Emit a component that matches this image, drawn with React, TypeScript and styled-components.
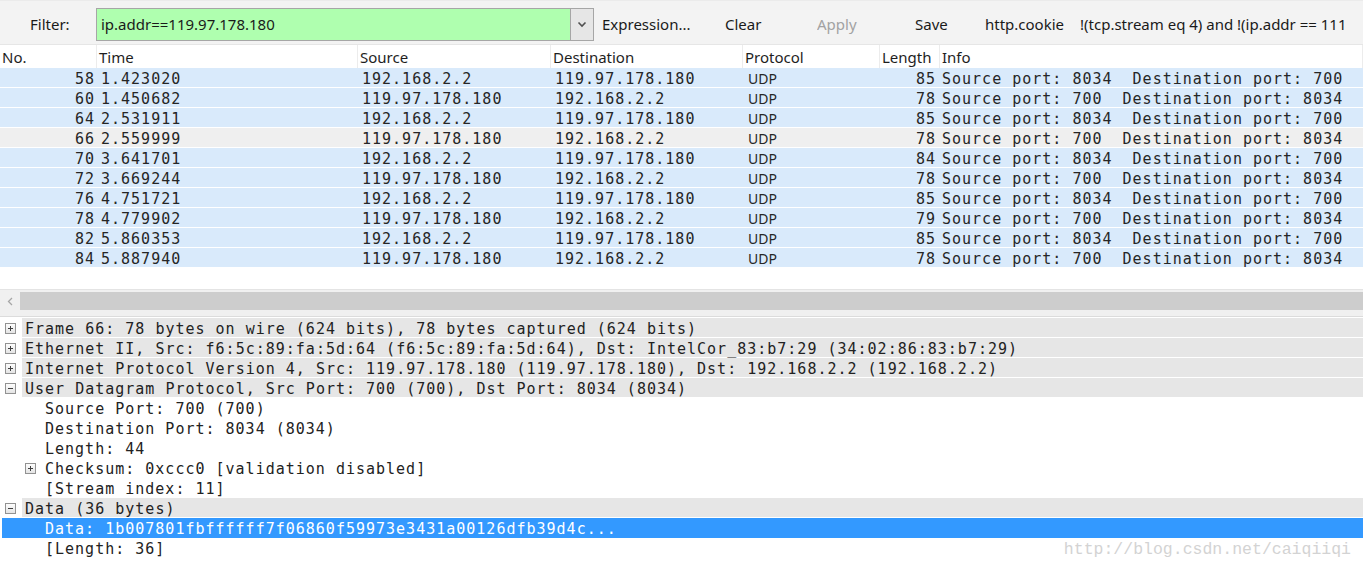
import styled, { createGlobalStyle } from 'styled-components';

const GlobalStyle = createGlobalStyle`
  html, body {
    margin: 0;
    padding: 0;
    background: #fff;
  }
  body {
    font-family: "Noto Sans", "Liberation Sans", sans-serif;
  }
`;

const COLS = '97px 261px 193px 192px 137px 60px 1fr';

const Window = styled.div`
  position: relative;
  width: 1363px;
  height: 568px;
  overflow: hidden;
  background: #fff;
  display: flex;
  flex-direction: column;
`;

// Filter toolbar
const Toolbar = styled.div`
  height: 45px;
  box-sizing: border-box;
  padding-top: 3px;
  display: flex;
  align-items: center;
  background: #f3f3f3;
  border-top: 1px solid #ebebeb;
  border-bottom: 1px solid #e6e6e6;
  font-size: 15px;
  color: #1a1a1a;
  white-space: nowrap;
`;

const FilterLabel = styled.span`
  width: 66px;
  padding-left: 30px;
`;

const FilterCombo = styled.div`
  display: flex;
  height: 33px;
  width: 498px;
  margin-right: 8px;
`;

const FilterInput = styled.div`
  flex: 1;
  box-sizing: border-box;
  display: flex;
  align-items: center;
  padding-left: 4px;
  background: #afffaf;
  border: 1px solid #a6a6a6;
  border-right: none;
`;

const DropButton = styled.div`
  width: 24px;
  box-sizing: border-box;
  display: flex;
  align-items: center;
  justify-content: center;
  background: #e6e6e6;
  border: 1px solid #a6a6a6;
`;

const ToolButton = styled.span<{ $w?: number; $disabled?: boolean }>`
  ${(p) => (p.$w ? `width: ${p.$w}px;` : 'flex: 1;')}
  flex-shrink: 0;
  overflow: hidden;
  color: ${(p) => (p.$disabled ? '#a2a2a2' : '#1a1a1a')};
`;

// Packet list
const ListHeader = styled.div`
  display: grid;
  grid-template-columns: ${COLS};
  height: 23px;
  background: #fff;
  font-size: 15px;
  color: #1e1e1e;
`;

const HeaderCell = styled.div`
  display: flex;
  align-items: center;
  padding-left: 2px;
  border-right: 1px solid #ececec;
  white-space: nowrap;
  overflow: hidden;
`;

const PacketList = styled.div`
  height: 221px;
  background: #fff;
`;

const PacketRow = styled.div<{ $current?: boolean }>`
  display: grid;
  grid-template-columns: ${COLS};
  height: 19px;
  border-bottom: 1px solid #fff;
  background: ${(p) => (p.$current ? '#efefef' : '#d9eafb')};
  font-family: "DejaVu Sans Mono", "Liberation Mono", monospace;
  font-size: 15px;
  letter-spacing: 1px;
  color: #262626;
`;

const Cell = styled.div<{ $align?: 'right'; $pad?: number; $sans?: boolean }>`
  box-sizing: border-box;
  height: 19px;
  padding-top: 2px;
  line-height: 19px;
  white-space: pre;
  overflow-x: clip;
  text-align: ${(p) => p.$align ?? 'left'};
  ${(p) => (p.$align === 'right' ? `padding-right: ${p.$pad ?? 2}px;` : `padding-left: ${p.$pad ?? 4}px;`)}
  ${(p) =>
    p.$sans &&
    `font-family: "Noto Sans", "Liberation Sans", sans-serif; font-size: 14px; letter-spacing: 0; padding-top: 1px;`}
`;

const HScrollbar = styled.div`
  height: 22px;
  box-sizing: border-box;
  display: flex;
  align-items: stretch;
  padding: 2px 0 1px;
  background: #f0f0f0;
  border-top: 1px solid #e4e4e4;
`;

const ScrollArrow = styled.div`
  width: 20px;
  display: flex;
  align-items: center;
  justify-content: center;
`;

const ScrollThumb = styled.div`
  flex: 1;
  background: #cdcdcd;
`;

const Splitter = styled.div`
  height: 5px;
  background: #f0f0f0;
  border-bottom: 1px solid #dcdcdc;
`;

// Packet details tree
const Tree = styled.div`
  flex: 1;
  padding-top: 1px;
  background: #fff;
  font-family: "DejaVu Sans Mono", "Liberation Mono", monospace;
  font-size: 15px;
  letter-spacing: 1px;
  color: #222;
`;

const TreeRow = styled.div<{ $indent: number; $selected?: boolean }>`
  display: flex;
  align-items: flex-start;
  height: 20px;
  padding-left: ${(p) => (p.$selected ? p.$indent - 2 : p.$indent)}px;
  ${(p) => p.$selected && 'margin-left: 2px; background: #3399ff; color: #fff;'}
`;

const ExpanderSlot = styled.div<{ $hidden?: boolean }>`
  width: 11px;
  height: 19px;
  padding-top: 1px;
  display: flex;
  align-items: center;
  visibility: ${(p) => (p.$hidden ? 'hidden' : 'visible')};
`;

const TreeLabel = styled.div<{ $section?: boolean }>`
  flex: 1;
  box-sizing: border-box;
  margin-left: 6px;
  padding-left: 3px;
  padding-top: 2px;
  height: 19px;
  line-height: 19px;
  white-space: pre;
  overflow-x: clip;
  background: ${(p) => (p.$section ? '#e6e6e6' : 'transparent')};
`;

const Watermark = styled.div`
  position: absolute;
  right: 12px;
  bottom: 9px;
  font-family: "Liberation Mono", "DejaVu Sans Mono", monospace;
  font-size: 16.5px;
  color: #d3d3d3;
  pointer-events: none;
`;

const Expander = ({ open }: { open?: boolean }) => (
  <svg width="11" height="11" viewBox="0 0 11 11">
    <defs>
      <linearGradient id="exp" x1="0" y1="0" x2="0" y2="1">
        <stop offset="0" stopColor="#ffffff" />
        <stop offset="1" stopColor="#e3e3e3" />
      </linearGradient>
    </defs>
    <rect x="0.5" y="0.5" width="10" height="10" fill="url(#exp)" stroke="#929292" />
    <line x1="3" y1="5.5" x2="8" y2="5.5" stroke="#404040" />
    {!open && <line x1="5.5" y1="3" x2="5.5" y2="8" stroke="#404040" />}
  </svg>
);

type Packet = [string, string, string, string, string, string];

const packets: Packet[] = [
  ['58', '1.423020', '192.168.2.2', '119.97.178.180', '85', 'Source port: 8034  Destination port: 700'],
  ['60', '1.450682', '119.97.178.180', '192.168.2.2', '78', 'Source port: 700  Destination port: 8034'],
  ['64', '2.531911', '192.168.2.2', '119.97.178.180', '85', 'Source port: 8034  Destination port: 700'],
  ['66', '2.559999', '119.97.178.180', '192.168.2.2', '78', 'Source port: 700  Destination port: 8034'],
  ['70', '3.641701', '192.168.2.2', '119.97.178.180', '84', 'Source port: 8034  Destination port: 700'],
  ['72', '3.669244', '119.97.178.180', '192.168.2.2', '78', 'Source port: 700  Destination port: 8034'],
  ['76', '4.751721', '192.168.2.2', '119.97.178.180', '85', 'Source port: 8034  Destination port: 700'],
  ['78', '4.779902', '119.97.178.180', '192.168.2.2', '79', 'Source port: 700  Destination port: 8034'],
  ['82', '5.860353', '192.168.2.2', '119.97.178.180', '85', 'Source port: 8034  Destination port: 700'],
  ['84', '5.887940', '119.97.178.180', '192.168.2.2', '78', 'Source port: 700  Destination port: 8034'],
];

type Node = { text: string; level: 0 | 1; expander?: 'open' | 'closed'; selected?: boolean };

const details: Node[] = [
  { text: 'Frame 66: 78 bytes on wire (624 bits), 78 bytes captured (624 bits)', level: 0, expander: 'closed' },
  { text: 'Ethernet II, Src: f6:5c:89:fa:5d:64 (f6:5c:89:fa:5d:64), Dst: IntelCor_83:b7:29 (34:02:86:83:b7:29)', level: 0, expander: 'closed' },
  { text: 'Internet Protocol Version 4, Src: 119.97.178.180 (119.97.178.180), Dst: 192.168.2.2 (192.168.2.2)', level: 0, expander: 'closed' },
  { text: 'User Datagram Protocol, Src Port: 700 (700), Dst Port: 8034 (8034)', level: 0, expander: 'open' },
  { text: 'Source Port: 700 (700)', level: 1 },
  { text: 'Destination Port: 8034 (8034)', level: 1 },
  { text: 'Length: 44', level: 1 },
  { text: 'Checksum: 0xccc0 [validation disabled]', level: 1, expander: 'closed' },
  { text: '[Stream index: 11]', level: 1 },
  { text: 'Data (36 bytes)', level: 0, expander: 'open' },
  { text: 'Data: 1b007801fbffffff7f06860f59973e3431a00126dfb39d4c...', level: 1, selected: true },
  { text: '[Length: 36]', level: 1 },
];

export default function App() {
  return (
    <>
      <GlobalStyle />
      <Window>
        <Toolbar>
          <FilterLabel>Filter:</FilterLabel>
          <FilterCombo>
            <FilterInput>ip.addr==119.97.178.180</FilterInput>
            <DropButton>
              <svg width="10" height="7" viewBox="0 0 10 7">
                <polyline points="1.5,1.5 5,5 8.5,1.5" fill="none" stroke="#505050" strokeWidth="1.6" />
              </svg>
            </DropButton>
          </FilterCombo>
          <ToolButton $w={123}>Expression...</ToolButton>
          <ToolButton $w={92}>Clear</ToolButton>
          <ToolButton $w={98} $disabled>
            Apply
          </ToolButton>
          <ToolButton $w={70}>Save</ToolButton>
          <ToolButton $w={95}>http.cookie</ToolButton>
          <ToolButton>!(tcp.stream eq 4) and !(ip.addr == 111</ToolButton>
        </Toolbar>

        <ListHeader>
          <HeaderCell>No.</HeaderCell>
          <HeaderCell>Time</HeaderCell>
          <HeaderCell>Source</HeaderCell>
          <HeaderCell>Destination</HeaderCell>
          <HeaderCell>Protocol</HeaderCell>
          <HeaderCell>Length</HeaderCell>
          <HeaderCell>Info</HeaderCell>
        </ListHeader>

        <PacketList>
          {packets.map(([no, time, src, dst, len, info]) => (
            <PacketRow key={no} $current={no === '66'}>
              <Cell $align="right">{no}</Cell>
              <Cell>{time}</Cell>
              <Cell>{src}</Cell>
              <Cell>{dst}</Cell>
              <Cell $sans $pad={5}>
                UDP
              </Cell>
              <Cell $align="right" $pad={4}>
                {len}
              </Cell>
              <Cell $pad={2}>{info}</Cell>
            </PacketRow>
          ))}
        </PacketList>

        <HScrollbar>
          <ScrollArrow>
            <svg width="6" height="9" viewBox="0 0 6 9">
              <polyline points="5,1 1.5,4.5 5,8" fill="none" stroke="#a6a6a6" strokeWidth="1.3" />
            </svg>
          </ScrollArrow>
          <ScrollThumb />
        </HScrollbar>
        <Splitter />

        <Tree>
          {details.map((n) => (
            <TreeRow key={n.text} $indent={n.level === 0 ? 5 : 25} $selected={n.selected}>
              <ExpanderSlot $hidden={!n.expander}>
                <Expander open={n.expander === 'open'} />
              </ExpanderSlot>
              <TreeLabel $section={n.level === 0}>{n.text}</TreeLabel>
            </TreeRow>
          ))}
        </Tree>

        <Watermark>http://blog.csdn.net/caiqiiqi</Watermark>
      </Window>
    </>
  );
}
